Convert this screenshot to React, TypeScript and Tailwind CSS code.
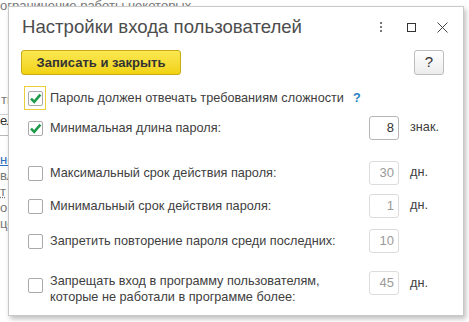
import React from "react";

type Row = {
  label: string[];
  checked?: boolean;
  focused?: boolean;
  value?: string;
  unit?: string;
  disabled?: boolean;
  hint?: boolean;
  mt: string;
};

const rows: Row[] = [
  { label: ["Пароль должен отвечать требованиям сложности"], checked: true, focused: true, hint: true, mt: "mt-[11px]" },
  { label: ["Минимальная длина пароля:"], checked: true, value: "8", unit: "знак.", mt: "mt-[6px]" },
  { label: ["Максимальный срок действия пароля:"], value: "30", unit: "дн.", disabled: true, mt: "mt-[21px]" },
  { label: ["Минимальный срок действия пароля:"], value: "1", unit: "дн.", disabled: true, mt: "mt-[9px]" },
  { label: ["Запретить повторение пароля среди последних:"], value: "10", disabled: true, mt: "mt-[11px]" },
  {
    label: ["Запрещать вход в программу пользователям,", "которые не работали в программе более:"],
    value: "45",
    unit: "дн.",
    disabled: true,
    mt: "mt-[18px]",
  },
];

function Checkbox({ checked, focused }: { checked?: boolean; focused?: boolean }) {
  return (
    <div
      className={
        "w-[22px] h-[24px] shrink-0 flex items-center justify-center border " +
        (focused ? "border-[#e9cf3c]" : "border-transparent")
      }
    >
      <div className="w-[15px] h-[15px] rounded-[2px] border border-[#a9a9a9] bg-white flex items-center justify-center">
        {checked && (
          <svg width="13" height="13" viewBox="0 0 13 13">
            <path d="M2 6.6 L5.2 9.8 L11.4 2.6" fill="none" stroke="#1f9a4b" strokeWidth="2.6" />
          </svg>
        )}
      </div>
    </div>
  );
}

function SettingRow({ row }: { row: Row }) {
  const multi = row.label.length > 1;
  return (
    <div className={"flex pl-[15px] pr-[8px] " + (multi ? "items-start " : "items-center ") + row.mt}>
      <div className={multi ? "pt-[2px]" : ""}>
        <Checkbox checked={row.checked} focused={row.focused} />
      </div>
      <div className={"ml-[4px] flex-1 text-[12.7px] text-[#404040] leading-[16px] " + (multi ? "pt-[2px]" : "")}>
        {row.label.map((l) => (
          <div key={l}>
            {l}
            {row.hint && <span className="ml-[9px] font-bold text-[#2a7fc0]">?</span>}
          </div>
        ))}
      </div>
      {row.value && (
        <div
          className={
            "w-[30px] h-[24px] rounded-[3px] border bg-white flex items-center justify-end pr-[4px] text-[13px] " +
            (row.disabled ? "border-[#dcdcdc] text-[#9a9a9a]" : "border-[#b5b5b5] text-[#333]")
          }
        >
          {row.value}
        </div>
      )}
      {row.value && (
        <div className={"w-[45px] ml-[11px] text-[12.7px] text-[#404040] " + (multi ? "leading-[24px]" : "")}>
          {row.unit}
        </div>
      )}
    </div>
  );
}

export default function App() {
  return (
    <div className="relative w-[469px] h-[322px] overflow-hidden bg-white font-['Liberation_Sans',Arial,sans-serif]">
      {/* window behind the dialog */}
      <div className="flex flex-col text-[13px] text-[#777] leading-[16px]">
        <div className="mt-[-2px] whitespace-nowrap">ограничение работы некоторых</div>
        <div className="mt-[78px] pl-[1px]">тпуск</div>
        <div className="mt-[6px] border-t border-[#d0d0d0] w-[40px]" />
        <div className="mt-[-2px] text-[#333]">ели</div>
        <div className="mt-[6px] border-t border-[#b8b8b8] w-[40px]" />
        <div className="mt-[16px] text-[#2a6cc0] underline">нет</div>
        <div>вл</div>
        <div className="underline decoration-dotted">т</div>
        <div>о</div>
        <div>цо</div>
      </div>

      {/* dialog */}
      <div className="absolute left-[8px] top-[6px] w-[456px] h-[310px] bg-white border border-[#c9c9c9] shadow-[2px_3px_5px_rgba(0,0,0,0.25)] flex flex-col">
        <div className="h-[40px] flex items-center pl-[13px] pr-[14px]">
          <div className="flex-1 text-[18.6px] text-[#4d4d4d] whitespace-nowrap">Настройки входа пользователей</div>
          <div className="flex flex-col gap-[2px] mr-[25px]">
            <span className="w-[2px] h-[2px] bg-[#777]" />
            <span className="w-[2px] h-[2px] bg-[#777]" />
            <span className="w-[2px] h-[2px] bg-[#777]" />
          </div>
          <div className="w-[9px] h-[9px] border border-[#333] mr-[21px]" />
          <svg width="11" height="11" viewBox="0 0 11 11" className="mr-[1px]">
            <path d="M0.5 0.5 L10.5 10.5 M10.5 0.5 L0.5 10.5" stroke="#444" strokeWidth="1" />
          </svg>
        </div>

        <div className="mt-[3px] flex items-center pl-[12px] pr-[19px]">
          <button className="w-[160px] h-[25px] rounded-[3px] border border-[#c7ab10] bg-gradient-to-b from-[#fbe84f] to-[#f1d20c] text-[13px] font-bold text-[#333]">
            Записать и закрыть
          </button>
          <button className="ml-auto w-[30px] h-[25px] rounded-[3px] border border-[#bdbdbd] bg-gradient-to-b from-white to-[#ececec] text-[15px] text-[#333]">
            ?
          </button>
        </div>

        {rows.map((r, i) => (
          <SettingRow key={i} row={r} />
        ))}
      </div>
    </div>
  );
}
